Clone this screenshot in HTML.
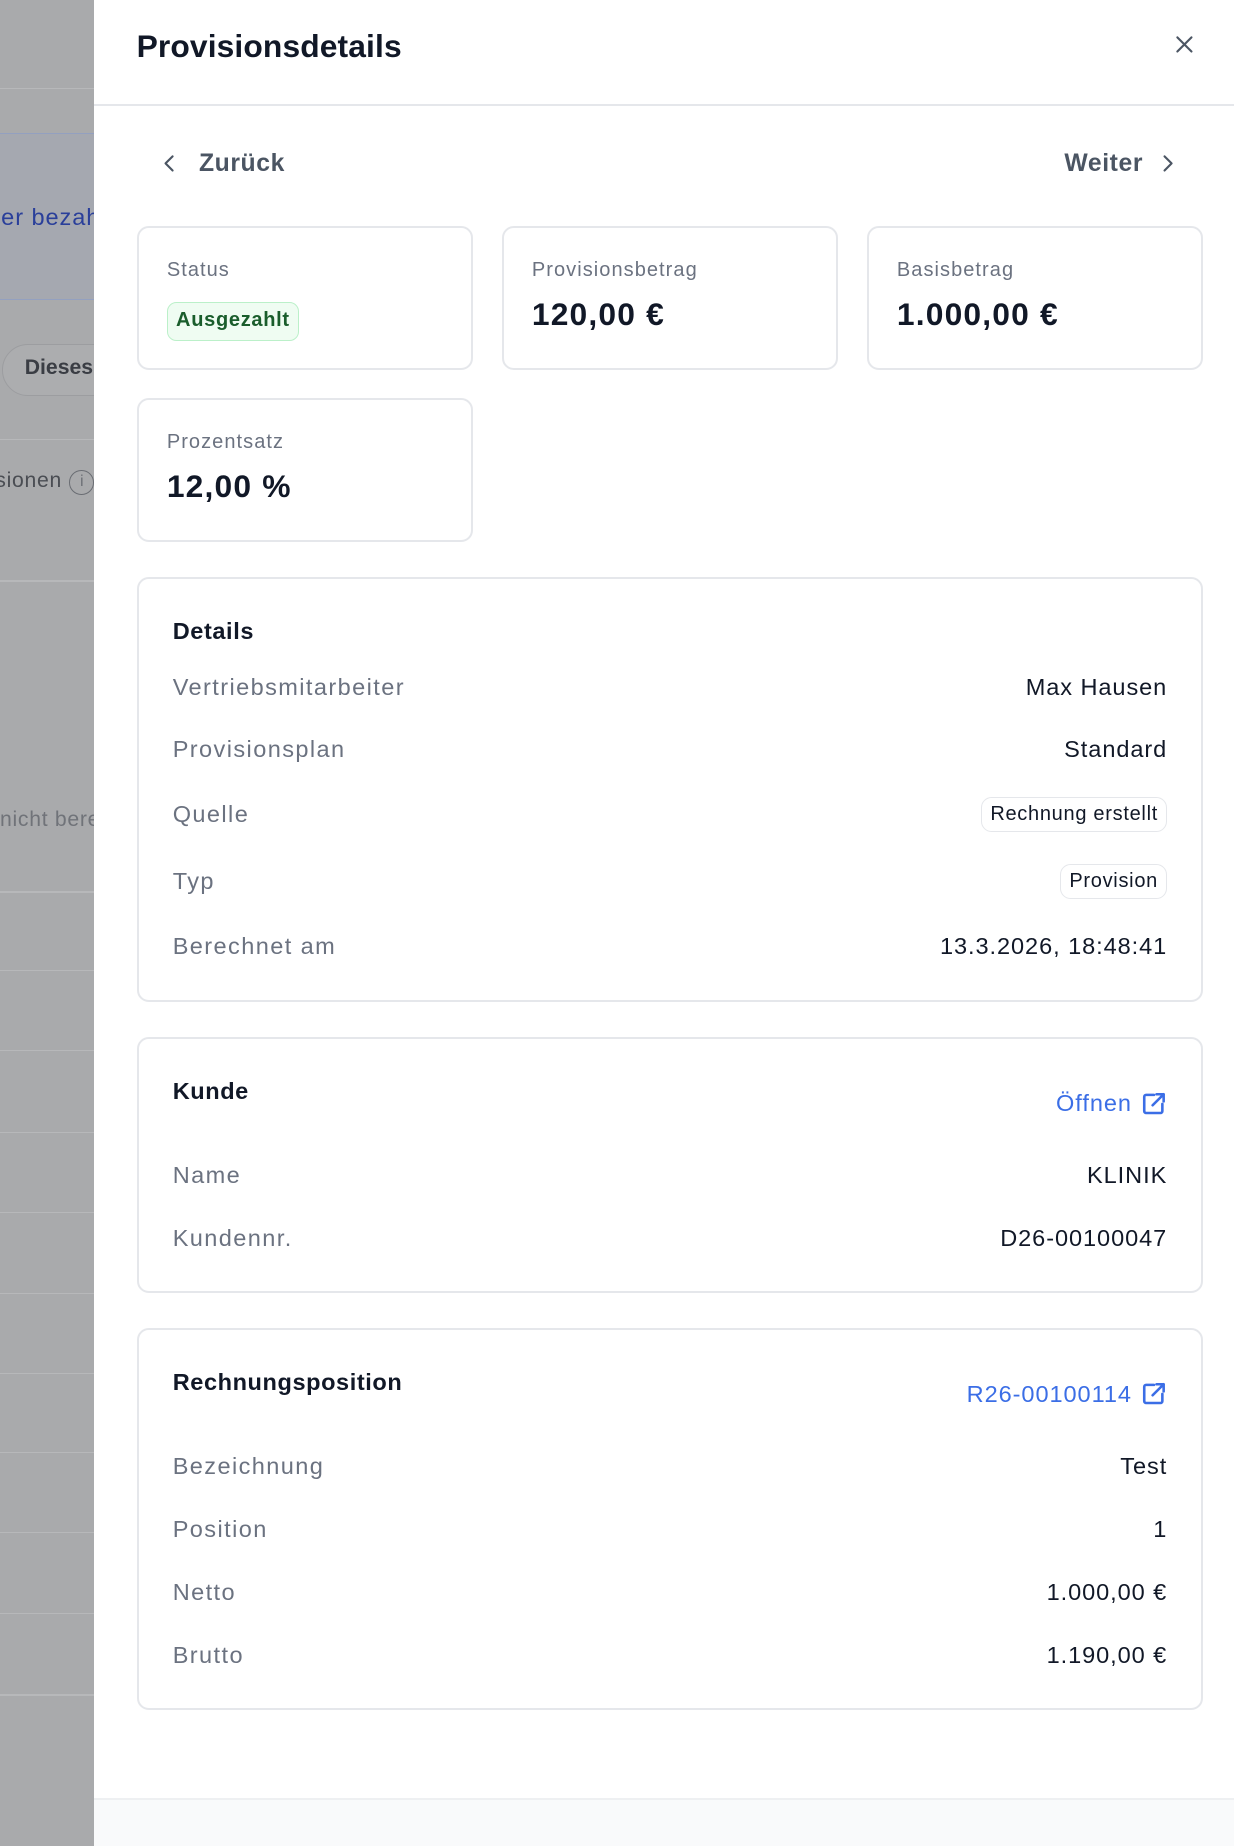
<!DOCTYPE html>
<html><head><meta charset="utf-8"><style>
*{box-sizing:border-box;margin:0;padding:0}
html,body{width:1234px;height:1846px;overflow:hidden;background:#fff}
#w{zoom:1.17748;width:1048px;height:1568px;position:relative;font-family:"Liberation Sans",sans-serif;color:#111827}
.bg{position:absolute;left:0;top:0;width:80px;height:1568px;background:#a9aaac;overflow:hidden}
.hl{position:absolute;left:0;width:80px;height:1px;background:#b7b8ba}
.panel{position:absolute;left:80px;top:0;width:968px;height:1568px;background:#fff}
.hdr{height:90px;border-bottom:2px solid #e5e7eb}
.title{position:absolute;left:36px;top:24px;font-size:27px;font-weight:700;letter-spacing:0.1px}
.abs{position:absolute}
.card{position:absolute;border:2px solid #e5e7eb;border-radius:10px;background:#fff}
.lbl{position:absolute;left:24px;font-size:17px;color:#6b7280;letter-spacing:0.9px}
.val{position:absolute;left:24px;font-size:27px;font-weight:700;letter-spacing:1px}
.row{position:absolute;left:29px;right:29px;font-size:20px;display:flex;justify-content:space-between;align-items:center;height:30px;letter-spacing:0.8px}
.row .k{color:#6b7280;letter-spacing:1.2px}
.row .v{color:#111827}
.sec{position:absolute;left:29px;font-size:20px;font-weight:700;letter-spacing:0.5px}
.pill{border:1.5px solid #e5e7eb;border-radius:9px;padding:4px 7px;font-size:17px;letter-spacing:0.6px}
.link{position:absolute;right:29px;color:#3b6ee6;font-size:20px;display:flex;align-items:center;gap:8px;letter-spacing:0.8px}
.foot{position:absolute;left:0;top:1527px;width:968px;height:41px;background:#f9fafb;border-top:2px solid #eef0f2}
</style></head><body><div id="w">
<div class="bg">
 <div class="hl" style="top:75px"></div>
 <div style="position:absolute;left:0;top:113px;width:80px;height:142px;background:#a5a8b0;border-top:1px solid #93a0c0;border-bottom:1px solid #93a0c0"></div>
 <div class="abs" style="left:1px;top:173px;font-size:20px;color:#2a3f9a;white-space:nowrap;letter-spacing:0.8px">er bezahlt</div>
 <div class="abs" style="left:2px;top:292px;width:120px;height:44px;border:1.5px solid #9c9da0;border-radius:22px;background:#acadaf"></div>
 <div class="abs" style="left:21px;top:302px;font-size:18px;color:#3a3d44;font-weight:700">Dieses</div>
 <div class="hl" style="top:373px"></div>
 <div class="abs" style="left:-4px;top:398px;font-size:18px;color:#4a4d53;white-space:nowrap;letter-spacing:0.6px">sionen</div>
 <div class="abs" style="left:59px;top:399px;width:21px;height:21px;border:1.5px solid #6a6d73;border-radius:50%;font-size:13px;color:#6a6d73;text-align:center;line-height:18px">i</div>
 <div class="hl" style="top:493px"></div>
 <div class="abs" style="left:0;top:686px;font-size:18px;color:#707379;white-space:nowrap;letter-spacing:0.6px">nicht bereit</div>
 <div class="hl" style="top:757px"></div><div class="hl" style="top:824px"></div><div class="hl" style="top:892px"></div><div class="hl" style="top:961px"></div><div class="hl" style="top:1029px"></div><div class="hl" style="top:1098px"></div><div class="hl" style="top:1166px"></div><div class="hl" style="top:1233px"></div><div class="hl" style="top:1301px"></div><div class="hl" style="top:1370px"></div><div class="hl" style="top:1439px"></div>
</div>
<div class="panel">
 <div class="hdr"></div>
 <div class="title">Provisionsdetails</div>
 <svg class="abs" style="left:918px;top:30px" width="16" height="16" viewBox="0 0 16 16"><path d="M2 2L14 14M14 2L2 14" stroke="#4b5563" stroke-width="1.8" stroke-linecap="round"/></svg>
 <svg class="abs" style="left:58px;top:131px" width="12" height="16" viewBox="0 0 12 16"><path d="M9 2L3 8L9 14" stroke="#4b5563" stroke-width="1.8" fill="none" stroke-linecap="round" stroke-linejoin="round"/></svg>
 <div class="abs" style="left:89px;top:127px;font-size:21px;color:#4b5563;font-weight:700;letter-spacing:0.5px">Zurück</div>
 <div class="abs" style="left:824px;top:127px;font-size:21px;color:#4b5563;font-weight:700;letter-spacing:0.5px">Weiter</div>
 <svg class="abs" style="left:906px;top:131px" width="12" height="16" viewBox="0 0 12 16"><path d="M3 2L9 8L3 14" stroke="#4b5563" stroke-width="1.8" fill="none" stroke-linecap="round" stroke-linejoin="round"/></svg>

 <div class="card" style="left:36px;top:192px;width:286px;height:122px">
  <div class="lbl" style="top:26px">Status</div>
  <div class="abs" style="left:24px;top:63px;height:33px;padding:0 7px;background:#effcf2;border:1.5px solid #bbf0c9;border-radius:8px;color:#1a5d2c;font-weight:700;font-size:17px;line-height:30px;letter-spacing:0.6px">Ausgezahlt</div>
 </div>
 <div class="card" style="left:346px;top:192px;width:286px;height:122px">
  <div class="lbl" style="top:26px">Provisionsbetrag</div>
  <div class="val" style="top:58px">120,00 €</div>
 </div>
 <div class="card" style="left:656px;top:192px;width:286px;height:122px">
  <div class="lbl" style="top:26px">Basisbetrag</div>
  <div class="val" style="top:58px">1.000,00 €</div>
 </div>
 <div class="card" style="left:36px;top:338px;width:286px;height:122px">
  <div class="lbl" style="top:26px">Prozentsatz</div>
  <div class="val" style="top:58px">12,00 %</div>
 </div>

 <div class="card" style="left:36px;top:490px;width:906px;height:361px">
  <div class="sec" style="top:33px">Details</div>
  <div class="row" style="top:77px"><span class="k">Vertriebsmitarbeiter</span><span class="v">Max Hausen</span></div>
  <div class="row" style="top:130px"><span class="k">Provisionsplan</span><span class="v">Standard</span></div>
  <div class="row" style="top:185px"><span class="k">Quelle</span><span class="v pill">Rechnung erstellt</span></div>
  <div class="row" style="top:242px"><span class="k">Typ</span><span class="v pill">Provision</span></div>
  <div class="row" style="top:297px"><span class="k">Berechnet am</span><span class="v">13.3.2026, 18:48:41</span></div>
 </div>

 <div class="card" style="left:36px;top:881px;width:906px;height:217px">
  <div class="sec" style="top:33px">Kunde</div>
  <div class="link" style="top:43px">Öffnen <svg width="22" height="22" viewBox="0 0 20 20"><path d="M10 3H4a1.5 1.5 0 0 0-1.5 1.5v11A1.5 1.5 0 0 0 4 17h11a1.5 1.5 0 0 0 1.5-1.5V10M12 2.5h5.5V8M17.5 2.5L9 11" stroke="#3b6ee6" stroke-width="2" fill="none" stroke-linecap="round" stroke-linejoin="round"/></svg></div>
  <div class="row" style="top:101px"><span class="k">Name</span><span class="v">KLINIK</span></div>
  <div class="row" style="top:154px"><span class="k">Kundennr.</span><span class="v">D26-00100047</span></div>
 </div>

 <div class="card" style="left:36px;top:1128px;width:906px;height:324px">
  <div class="sec" style="top:33px">Rechnungsposition</div>
  <div class="link" style="top:43px">R26-00100114 <svg width="22" height="22" viewBox="0 0 20 20"><path d="M10 3H4a1.5 1.5 0 0 0-1.5 1.5v11A1.5 1.5 0 0 0 4 17h11a1.5 1.5 0 0 0 1.5-1.5V10M12 2.5h5.5V8M17.5 2.5L9 11" stroke="#3b6ee6" stroke-width="2" fill="none" stroke-linecap="round" stroke-linejoin="round"/></svg></div>
  <div class="row" style="top:101px"><span class="k">Bezeichnung</span><span class="v">Test</span></div>
  <div class="row" style="top:154px"><span class="k">Position</span><span class="v">1</span></div>
  <div class="row" style="top:208px"><span class="k">Netto</span><span class="v">1.000,00 €</span></div>
  <div class="row" style="top:261px"><span class="k">Brutto</span><span class="v">1.190,00 €</span></div>
 </div>
 <div class="foot"></div>
</div>
</div></body></html>
